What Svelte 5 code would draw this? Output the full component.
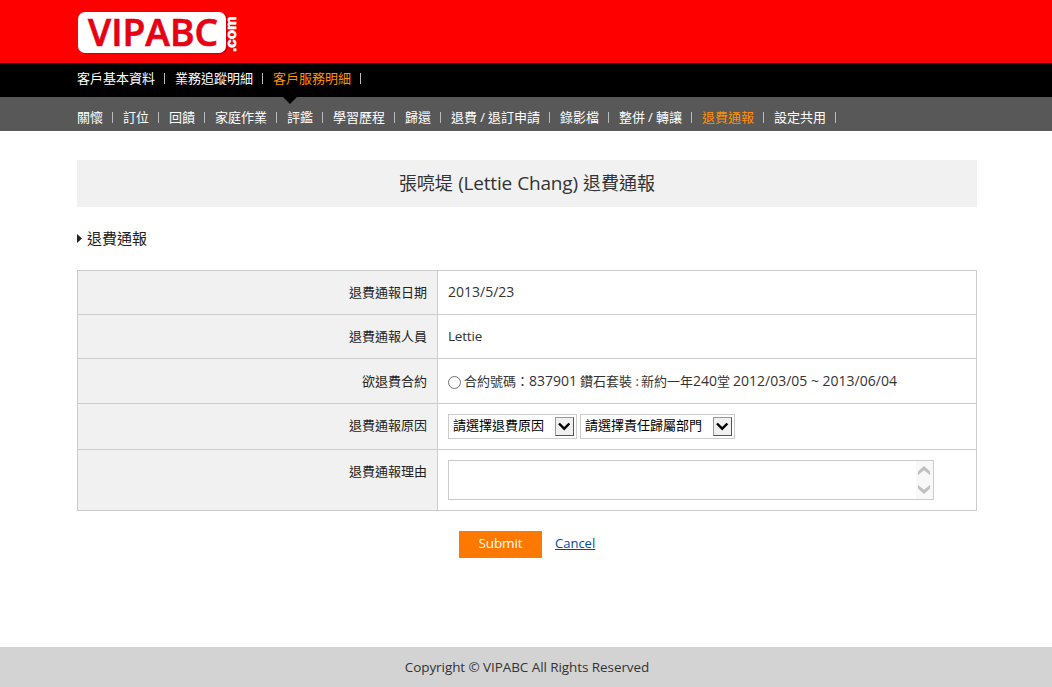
<script>
  const primary = [
    { label: '客戶基本資料' },
    { label: '業務追蹤明細' },
    { label: '客戶服務明細', active: true },
  ];
  const secondary = [
    { label: '關懷' },
    { label: '訂位' },
    { label: '回饋' },
    { label: '家庭作業' },
    { label: '評鑑' },
    { label: '學習歷程' },
    { label: '歸還' },
    { label: '退費 / 退訂申請', spaced: true },
    { label: '錄影檔' },
    { label: '整併 / 轉讓', spaced: true },
    { label: '退費通報', active: true },
    { label: '設定共用' },
  ];
</script>

<div class="page">
  <header>
    <div class="wrap">
      <svg class="logo" width="164" height="46" viewBox="0 0 164 46" role="img" aria-label="VIPABC.com">
        <rect x="2" y="3" width="149" height="41" rx="7" fill="#b90008" opacity=".7" />
        <rect x="1" y="2" width="148" height="41" rx="7" fill="#fff" />
        <text x="11" y="36.2" textLength="130" lengthAdjust="spacingAndGlyphs" class="brand">VIPABC</text>
        <text transform="translate(159 42) rotate(-90)" x="0" y="0" textLength="35.5" lengthAdjust="spacingAndGlyphs" class="dotcom">.com</text>
      </svg>
    </div>
  </header>

  <nav class="primary">
    <ul class="wrap">
      {#each primary as item}
        <li class:active={item.active}><a href="#top">{item.label}</a></li>
      {/each}
    </ul>
  </nav>
  <nav class="secondary">
    <svg class="pointer" width="14" height="7" viewBox="0 0 14 7"><path d="M0 0h14L7 7z" fill="#000" /></svg>
    <ul class="wrap">
      {#each secondary as item}
        <li class:active={item.active} class:spaced={item.spaced}><a href="#top">{item.label}</a></li>
      {/each}
    </ul>
  </nav>

  <main class="wrap">
    <h1>張喨堤 <span>(Lettie Chang)</span> 退費通報</h1>
    <h2>
      <svg width="5" height="9" viewBox="0 0 5 9"><path d="M0 0l5 4.5L0 9z" fill="#222" /></svg>
      退費通報
    </h2>

    <div class="form">
      <div class="row r1"><div class="label">退費通報日期</div><div class="value"><span class="num">2013/5/23</span></div></div>
      <div class="row r2"><div class="label">退費通報人員</div><div class="value"><span class="name">Lettie</span></div></div>
      <div class="row r3">
        <div class="label">欲退費合約</div>
        <div class="value">
          <i class="radio"></i>
          <span class="w1">合約號碼：</span><span class="num w2">837901</span><span class="w3">鑽石套裝 :</span><span class="w4">新約一年</span><span class="num w5">240</span><span class="w6">堂</span><span class="num w7">2012/03/05 ~ 2013/06/04</span>
        </div>
      </div>
      <div class="row r4">
        <div class="label">退費通報原因</div>
        <div class="value">
          {#each ['請選擇退費原因', '請選擇責任歸屬部門'] as text, i}
            <div class="select" class:wide={i === 1}>
              <span>{text}</span>
              <b><svg width="13" height="9" viewBox="0 0 13 9"><path d="M1 1.5l5.2 5.2 5.2-5.2" fill="none" stroke="#000" stroke-width="2.4" /></svg></b>
            </div>
          {/each}
        </div>
      </div>
      <div class="row r5">
        <div class="label">退費通報理由</div>
        <div class="value">
          <div class="textarea">
            <div class="scroll">
              <svg width="12" height="9" viewBox="0 0 12 9"><path d="M0 5.4L6 0l6 5.4V9L6 4.2 0 9z" fill="#bfbfbf" /></svg>
              <svg width="12" height="9" viewBox="0 0 12 9"><path d="M0 3.6L6 9l6-5.4V0L6 4.8 0 0z" fill="#bfbfbf" /></svg>
            </div>
          </div>
        </div>
      </div>
    </div>

    <div class="actions">
      <button>Submit</button>
      <a href="#top">Cancel</a>
    </div>
  </main>

  <footer><span>Copyright © VIPABC All Rights Reserved</span></footer>
</div>

<style>
  :global(body) { margin: 0; background: #fff; }
  .page {
    width: 1052px; height: 687px; display: flex; flex-direction: column; overflow: hidden;
    font: 13px/20px "Open Sans", "Noto Sans CJK TC", sans-serif; color: #333;
  }
  .page * { box-sizing: border-box; }
  .wrap { width: 900px; margin-left: 77px; }
  header { height: 63px; background: #f00; }
  .logo { display: block; margin-top: 10px; overflow: visible; }
  .brand { font: 600 38px "Open Sans", sans-serif; fill: #e60012; stroke: #e60012; stroke-width: .7; }
  .dotcom { font: 700 14px "Liberation Sans", sans-serif; fill: #fff; stroke: #fff; stroke-width: .6; }

  nav ul { display: flex; list-style: none; padding: 0; margin-top: 0; margin-bottom: 0; }
  nav li { display: flex; align-items: center; white-space: nowrap; margin-right: 10px; height: 20px; }
  nav li::after { content: ""; width: 1px; height: 11px; margin-left: 9px; background: #bbb; }
  nav a { color: #fff; text-decoration: none; }
  nav .active a { color: #ff9000; }
  nav .spaced a { word-spacing: -.3px; }
  .primary { height: 34px; background: #000; padding-top: 5px; }
  .secondary { height: 34px; background: #585858; padding-top: 10px; position: relative; }
  .pointer { position: absolute; left: 283px; top: 0; }

  main { flex: 1; }
  h1 {
    height: 47px; margin: 29px 0 0; background: #f1f1f1; text-align: center;
    font-size: 18px; line-height: 46px; font-weight: 400; color: #333; word-spacing: .6px;
  }
  h1 span { font-size: 19px; letter-spacing: -.2px; }
  h2 { display: flex; align-items: center; gap: 5px; height: 20px; margin: 21px 0 22px; font-size: 15px; font-weight: 400; color: #222; }
  h2 svg { margin-top: 1px; }

  .form { border: 1px solid #ccc; height: 241px; }
  .row { display: flex; }
  .row + .row { border-top: 1px solid #ccc; }
  .r1 { height: 43px; } .r2 { height: 44px; } .r3 { height: 45px; } .r4 { height: 46px; } .r5 { height: 61px; }
  .label { width: 360px; background: #f1f1f1; border-right: 1px solid #ccc; text-align: right; padding: 11px 10px 0 0; color: #222; }
  .r3 .label { padding-top: 12px; }
  .value { flex: 1; display: flex; padding: 11px 0 0 10px; white-space: nowrap; }
  .num { font-size: 14px; }
  .name { font-size: 13.5px; letter-spacing: -.2px; }
  .r3 .value { padding-top: 12px; }
  .r3 span { flex: none; }
  .radio { width: 13px; height: 13px; border: 1px solid #707070; border-radius: 50%; margin: 5px 3px 0 0; }
  .w1 { width: 65px; }
  .w2 { width: 51px; }
  .w3 { width: 61px; }
  .w4 { width: 52px; }
  .w5 { width: 24px; }
  .w6 { width: 16px; }
  .r4 .value { padding-top: 10px; gap: 3px; }
  .select { width: 129px; height: 25px; border: 1px solid #ccc; display: flex; justify-content: space-between; padding: 2px 2px 2px 4px; color: #000; }
  .select.wide { width: 155px; }
  .select span { line-height: 16px; }
  .select b { width: 19px; height: 19px; background: #f0f0f0; border: 1px solid #999; border-right-color: #555; border-bottom-color: #555; display: flex; align-items: center; justify-content: center; }
  .r5 .value { padding-top: 10px; }
  .textarea { width: 486px; height: 40px; border: 1px solid #ccc; display: flex; justify-content: flex-end; }
  .scroll { width: 17px; background: #f8f8f8; display: flex; flex-direction: column; align-items: flex-start; justify-content: space-between; padding: 5px 0 5px 2px; }

  .actions { display: flex; margin: 20px 0 0 382px; gap: 13px; }
  button { width: 83px; height: 27px; border: 0; padding: 0 0 2px; background: #ff7800; color: #fff; font: 13.5px/25px "Open Sans", sans-serif; letter-spacing: -.1px; }
  .actions a { color: #004b9a; line-height: 25px; }
  footer { height: 40px; background: #d3d3d3; text-align: center; line-height: 40px; padding-left: 2px; font-size: 13.5px; letter-spacing: -.08px; }
</style>
